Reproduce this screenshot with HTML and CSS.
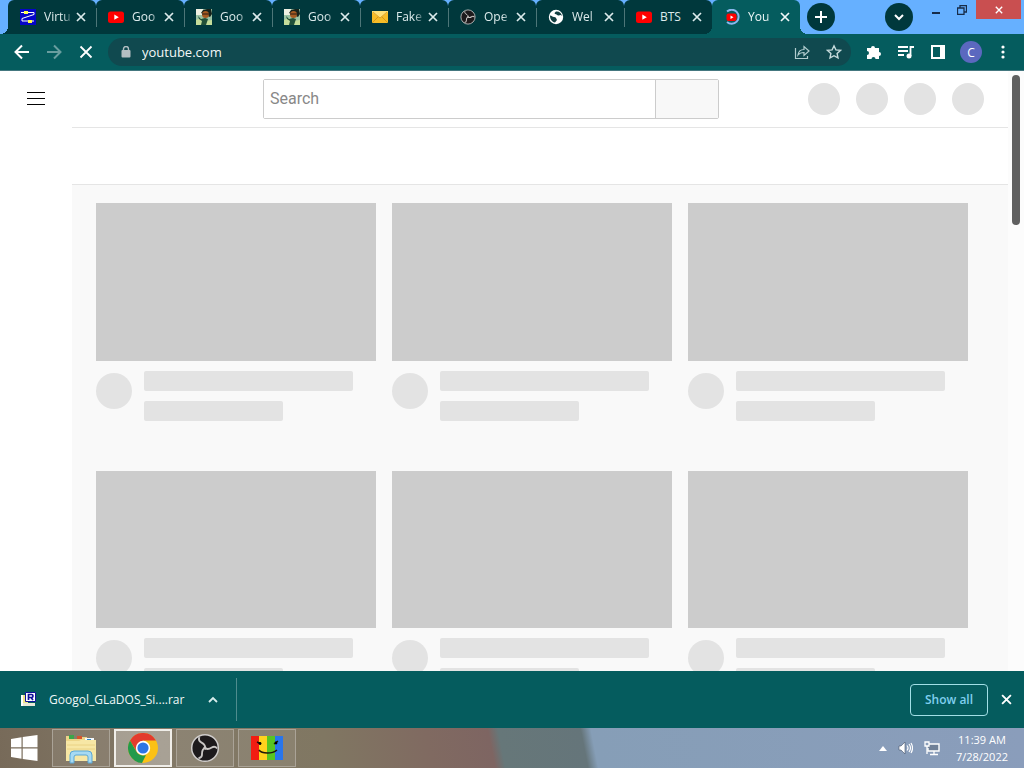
FILE: index.html
```html
<!DOCTYPE html>
<html lang="en">
<head>
<meta charset="utf-8">
<title>YouTube</title>
<link rel="stylesheet" href="styles.css">
</head>
<body>
<svg class="defs" width="0" height="0" aria-hidden="true">
  <symbol id="x" viewBox="0 0 10 10"><path d="M1 1l8 8M9 1L1 9" fill="none" stroke="currentColor" stroke-width="1.7"/></symbol>
  <symbol id="yt" viewBox="0 0 16 16"><rect x="0" y="2.500" width="16" height="11.500" rx="2.500" fill="#f00"/><path d="M6.300 5.600v5.200l4.500-2.600z" fill="#fff"/></symbol>
  <symbol id="photo" viewBox="0 0 16 16"><path d="M0 0h16v16H0z" fill="#9bc3a5"/><path d="M0 0h7v6H0z" fill="#eef0e2"/><path d="M0 11l5-2 4 3 7-1v5H0z" fill="#c5dd9a"/><path d="M5 4l2-3 4-1h4l1 5-2 3z" fill="#16221b"/><circle cx="9.500" cy="5.500" r="3.500" fill="#a65a22"/><path d="M6 5h7" stroke="#2a1c14"/><path d="M2 7l3 3 4-1 3 1-1 3-1 3H5l1-4-3-2z" fill="#215039"/></symbol>
  <symbol id="obs" viewBox="0 0 32 32"><circle cx="16" cy="16" r="14.200" fill="#1d1a1c" stroke="#d0cdcb" stroke-width="1.600"/><g id="blades" fill="none" stroke="#c9c6c4" stroke-width="2"><path id="blade" d="M16 17.500c1-4-1-6-4-7.500-2-1-3-3-2-5.500"/><path d="M16 17.500c1-4-1-6-4-7.500-2-1-3-3-2-5.500" transform="rotate(120 16 16)"/><path d="M16 17.500c1-4-1-6-4-7.500-2-1-3-3-2-5.500" transform="rotate(240 16 16)"/></g></symbol>
</svg>
<div class="browser">
  <header class="tabstrip">
    <nav class="tabs" aria-label="Tabs">
      <div class="tab first"><svg class="fav" viewBox="0 0 16 16"><path fill="#0505c8" d="M0 0h16v16H0z"/><path d="M1 3.500h13v2L2 9.500v2.500h12" fill="none" stroke="#fff"/><path d="M4 2h4v3H4zM8 11h4v3H8z" fill="#ffff4a"/></svg><span class="title">Virtu</span><button class="close" aria-label="Close tab"><svg><use href="#x"/></svg></button></div>
      <div class="tab"><svg class="fav"><use href="#yt"/></svg><span class="title">Goo</span><button class="close" aria-label="Close tab"><svg><use href="#x"/></svg></button></div>
      <div class="tab"><svg class="fav"><use href="#photo"/></svg><span class="title">Goo</span><button class="close" aria-label="Close tab"><svg><use href="#x"/></svg></button></div>
      <div class="tab"><svg class="fav"><use href="#photo"/></svg><span class="title">Goo</span><button class="close" aria-label="Close tab"><svg><use href="#x"/></svg></button></div>
      <div class="tab"><svg class="fav" viewBox="0 0 16 16"><rect y="2" width="16" height="12" rx="1" fill="#f7bd27"/><path d="M0 3l8 6 8-6v-1H0z" fill="#ffe177"/><path d="M1 3l7 6 7-6M1 13l5-5M15 13l-5-5" fill="none" stroke="#c98a12" stroke-width=".7"/></svg><span class="title">Fake</span><button class="close" aria-label="Close tab"><svg><use href="#x"/></svg></button></div>
      <div class="tab"><svg class="fav"><use href="#obs"/></svg><span class="title">Ope</span><button class="close" aria-label="Close tab"><svg><use href="#x"/></svg></button></div>
      <div class="tab"><svg class="fav" viewBox="0 0 16 16"><circle cx="8" cy="8" r="7.200" fill="#fff"/><path d="M2 6.500c2 0 2 1.500 4 1.500s2 1 3 3l-2 2.500c-3-.5-5-3-5-7zM8 2.500c-1 1.500-2 1-1 2.500 2 0 2 2 4 1.500 1-1 2-.5 3 .5-.5-3-3-5-6-4.500z" fill="#123f42"/></svg><span class="title">Wel</span><button class="close" aria-label="Close tab"><svg><use href="#x"/></svg></button></div>
      <div class="tab last"><svg class="fav"><use href="#yt"/></svg><span class="title">BTS</span><button class="close" aria-label="Close tab"><svg><use href="#x"/></svg></button></div>
      <div class="tab active"><svg class="fav" viewBox="0 0 16 16"><path d="M3 2.500A7 7 0 1 1 3 13" fill="none" stroke="#8ab8ee" stroke-width="2"/><rect x="2.500" y="4.500" width="10" height="7.500" rx="2" fill="#f00"/><path d="M6.500 6.500v3.400l3-1.700z" fill="#fff"/></svg><span class="title">You</span><button class="close" aria-label="Close tab"><svg><use href="#x"/></svg></button></div>
    </nav>
    <button class="round" aria-label="New tab"><svg width="14" height="14" viewBox="0 0 14 14"><path d="M7 1v12M1 7h12" stroke="#fff" stroke-width="2"/></svg></button>
    <div class="window-controls">
      <button class="round" aria-label="Search tabs"><svg width="12" height="12" viewBox="0 0 12 12"><path d="M2 4l4 4 4-4" fill="none" stroke="#fff" stroke-width="2"/></svg></button>
      <button class="win" aria-label="Minimize"><svg width="10" height="10" viewBox="0 0 10 10"><path d="M1 8h8" stroke="#172c49" stroke-width="2"/></svg></button>
      <button class="win" aria-label="Restore"><svg width="10" height="10" viewBox="0 0 10 10"><path d="M.5 3h6.500v6.500H.5zM3 2.500V.5h6.500V7H7.500" fill="none" stroke="#172c49" stroke-width="1.300"/></svg></button>
      <button class="win win-close" aria-label="Close"><svg width="8" height="8"><use href="#x"/></svg></button>
    </div>
  </header>
  <div class="toolbar">
    <div class="nav">
      <button aria-label="Back"><svg width="16" height="16" viewBox="0 0 16 16"><path d="M15 8H2M8 1.500L1.500 8 8 14.500" fill="none" stroke="#fff" stroke-width="2"/></svg></button>
      <button aria-label="Forward"><svg width="16" height="16" viewBox="0 0 16 16"><path d="M1 8h13M8 1.500L14.500 8 8 14.500" fill="none" stroke="#6a9d9f" stroke-width="2"/></svg></button>
      <button aria-label="Stop"><svg width="14" height="14" viewBox="0 0 14 14"><path d="M1.500 1.500l11 11M12.500 1.500l-11 11" stroke="#fff" stroke-width="1.800"/></svg></button>
    </div>
    <div class="omnibox">
      <svg width="10" height="12" viewBox="0 0 10 12"><rect x=".5" y="4" width="9" height="7.500" rx="1" fill="#b3bec2"/><path d="M2.500 5V3a2.500 2.500 0 0 1 5 0v2" fill="none" stroke="#b3bec2" stroke-width="1.400"/></svg>
      <input class="address" type="text" value="youtube.com" aria-label="Address">
      <button aria-label="Share"><svg width="16" height="16" viewBox="0 0 16 16"><path d="M1.500 4v10.500h12V12M4 11c.5-4 3-5.500 6-5.500V2.500l5 4.500-5 4.500V8.500C7.500 8.500 5.500 9 4 11z" fill="none" stroke="#b2cdcf" stroke-width="1.200"/></svg></button>
      <button aria-label="Bookmark"><svg width="16" height="16" viewBox="0 0 16 16"><path d="M8 1.800l1.900 4.100 4.500.5-3.300 3 .9 4.500L8 11.700l-4 2.200.9-4.500-3.300-3 4.500-.5z" fill="none" stroke="#c5dadb" stroke-width="1.400"/></svg></button>
    </div>
    <div class="actions">
      <button aria-label="Extensions"><svg width="16" height="16" viewBox="0 0 16 16"><path d="M1 4h4a2 2 0 1 1 4 0h4v4a2 2 0 1 1 0 4v3H9.500a2 2 0 1 0-4 0H1v-4a2 2 0 1 0 0-4z" fill="#fff"/></svg></button>
      <button aria-label="Media"><svg width="18" height="16" viewBox="0 0 18 16"><path d="M1 3h10M1 7h10M1 11h6M13.500 12V3H17" fill="none" stroke="#fff" stroke-width="1.800"/><circle cx="12" cy="12" r="2.500" fill="#fff"/></svg></button>
      <button aria-label="Side panel"><svg width="14" height="14" viewBox="0 0 14 14"><path d="M1 1h12v12H1z" fill="none" stroke="#fff" stroke-width="2"/><path d="M9 1h4v12H9z" fill="#fff"/></svg></button>
      <button class="profile" aria-label="Profile">C</button>
      <button class="more" aria-label="Menu"><svg width="4" height="14" viewBox="0 0 4 14" fill="#fff"><circle cx="2" cy="2" r="1.600"/><circle cx="2" cy="7" r="1.600"/><circle cx="2" cy="12" r="1.600"/></svg></button>
    </div>
  </div>
  <div class="page">
    <aside class="rail"><button aria-label="Guide"><svg width="18" height="14" viewBox="0 0 18 14"><path d="M0 .5h18M0 6.500h18M0 12.500h18" stroke="#030303"/></svg></button></aside>
    <main class="main">
      <div class="masthead">
        <form class="search"><input type="search" placeholder="Search" aria-label="Search"><button type="button" aria-label="Search"></button></form>
        <div class="circles"><i></i><i></i><i></i><i></i></div>
      </div>
      <div class="chips"></div>
      <div class="grid">
        <article class="card"><div class="thumb"></div><div class="details"><i></i><div class="lines"><b></b><b></b></div></div></article>
        <article class="card"><div class="thumb"></div><div class="details"><i></i><div class="lines"><b></b><b></b></div></div></article>
        <article class="card"><div class="thumb"></div><div class="details"><i></i><div class="lines"><b></b><b></b></div></div></article>
        <article class="card"><div class="thumb"></div><div class="details"><i></i><div class="lines"><b></b><b></b></div></div></article>
        <article class="card"><div class="thumb"></div><div class="details"><i></i><div class="lines"><b></b><b></b></div></div></article>
        <article class="card"><div class="thumb"></div><div class="details"><i></i><div class="lines"><b></b><b></b></div></div></article>
      </div>
    </main>
    <div class="scroll"><div class="thumbbar"></div></div>
  </div>
  <section class="downloads">
    <div class="download">
      <svg width="16" height="16" viewBox="0 0 16 16"><path d="M1 3h7v11H1z" fill="#efe58a"/><path d="M1 3h2v11H1z" fill="#fff"/><path d="M3 11h12v3H3z" fill="#e9e9d8"/><path d="M5.500 .5h10v9h-10z" fill="#fff" stroke="#10109a"/><path d="M8.500 8V2.500h3a1.500 1.500 0 0 1 0 3h-3M11 5.500L13 8" fill="none" stroke="#10109a" stroke-width="1.700"/></svg>
      <span>Googol_GLaDOS_Si....rar</span>
      <button aria-label="Download options"><svg width="10" height="8" viewBox="0 0 10 8"><path d="M1 6l4-4 4 4" fill="none" stroke="#d9eded" stroke-width="1.800"/></svg></button>
    </div>
    <button class="showall">Show all</button>
    <button class="dismiss" aria-label="Close downloads"><svg width="11" height="11"><use href="#x"/></svg></button>
  </section>
  <footer class="taskbar">
    <button class="start" aria-label="Start"><svg width="28" height="26" viewBox="0 0 28 26" fill="#fff"><path d="M1 4l10.500-1.700v10H1zM12.700 2.100L27.500 0v12.300H12.700zM1 13.500h10.500v10.200L1 22zM12.700 13.500h14.800V26l-14.800-2.100z"/></svg></button>
    <button class="app" aria-label="File Explorer"><svg width="32" height="32" viewBox="0 0 32 32"><path d="M1 4h7v3h8V5h6v3h9v21H1z" fill="#edd588"/><path d="M4 3h5v4H4z" fill="#3ba64b"/><path d="M12 4h5v3h-5z" fill="#d7542c"/><path d="M20 6h9v3h-9z" fill="#f5f8fa"/><path d="M22 7h4v1h-4z" fill="#2d8bcd"/><path d="M1 9h13l2-1h15v21H1z" fill="#f7e7a5"/><path d="M2 13h28M2 17h28" stroke="#ead284"/><path d="M5 31V23q0-4 4-4h14q4 0 4 4v8h-4v-6q0-2-2-2H11q-2 0-2 2v6z" fill="#a7daf3" stroke="#5aa7d5"/></svg></button>
    <button class="app current" aria-label="Chrome"><svg width="30" height="30" viewBox="0 0 30 30"><circle cx="15" cy="15" r="15" fill="#fbc116"/><path d="M2 7.500A15 15 0 0 1 28 7.500H15L9 19z" fill="#e33b2e"/><path d="M2 7.500L8.500 18.800c2 3.500 6 4.600 9.500 3.200L14 30A15 15 0 0 1 2 7.500z" fill="#229a4b"/><circle cx="15" cy="15" r="7.200" fill="#fff"/><circle cx="15" cy="15" r="5.600" fill="#2f75e5"/></svg></button>
    <button class="app" aria-label="OBS Studio"><svg width="30" height="30"><use href="#obs"/></svg></button>
    <button class="app" aria-label="Smiley"><svg width="32" height="24" viewBox="0 0 32 24"><path d="M0 0h8v24H0z" fill="#f21d12"/><path d="M8 0h8v24H8z" fill="#ffd21d"/><path d="M16 0h8v24h-8z" fill="#58c421"/><path d="M24 0h8v24h-8z" fill="#2875ec"/><path d="M8 14c3 4 13 4 18 0M6 6l4 2M23 8l4-3" fill="none" stroke="#1c180d" stroke-width="1.500"/><circle cx="9" cy="7.500" r="1.400"/><circle cx="25" cy="7" r="1.400"/></svg></button>
    <div class="tray">
      <svg width="8" height="5" viewBox="0 0 8 5"><path d="M4 0l4 5H0z" fill="#fff"/></svg>
      <svg width="15" height="14" viewBox="0 0 15 14"><path d="M1 5h2l4-4v12L3 9H1z" fill="#fff" stroke="#44536a" stroke-width=".6"/><path d="M9 4.500q2 2.500 0 5M11 3q3 4 0 8M13 2q3 5 0 10" fill="none" stroke="#fff" stroke-width="1.200"/></svg>
      <svg width="16" height="15" viewBox="0 0 16 15"><path d="M5 3h10v7H4V7" fill="#6f8097" stroke="#fff" stroke-width="1.400"/><path d="M1 1h4v4H1zM3 5v8M6 13.500h8M10 10v3" fill="none" stroke="#fff" stroke-width="1.300"/></svg>
      <time class="clock"><span>11:39 AM</span><span>7/28/2022</span></time>
    </div>
  </footer>
</div>
</body>
</html>
```

FILE: styles.css
```css
* { box-sizing: border-box; }
body { margin: 0; font-family: "Open Sans", "Noto Sans", sans-serif; font-size: 12px; }
button { margin: 0; padding: 0; border: 0; background: none; color: inherit; font: inherit; display: flex; align-items: center; justify-content: center; flex: none; }
svg { display: block; flex: none; }
.defs { position: absolute; }
.browser { height: 100vh; display: flex; flex-direction: column; overflow: hidden; }

.tabstrip { display: flex; height: 34px; background: #66b0ff; padding-left: 8px; flex: none; }
.tabs { display: flex; flex: 0 1 792px; min-width: 0; }
.tab { position: relative; flex: 1 1 0; min-width: 0; display: flex; align-items: center; padding: 0 8px 0 12px; background: #00383c; border-radius: 6px 6px 0 0; color: #dcebec; }
.tab:not(.active):not(.last)::after { content: ""; position: absolute; right: -1px; top: 8px; width: 1px; height: 19px; background: #4d7678; z-index: 1; }
.active { background: #055c5e; color: #f0f8f8; }
.first::before, .active::before, .active::after { content: ""; position: absolute; bottom: 0; width: 8px; height: 8px; }
.first::before { left: -8px; background: radial-gradient(circle at 0 0, transparent 8px, #00383c 8px); }
.active::before { left: -8px; background: radial-gradient(circle at 0 0, transparent 8px, #055c5e 8px); }
.active::after { right: -8px; background: radial-gradient(circle at 100% 0, transparent 8px, #055c5e 8px); }
.fav { width: 16px; height: 16px; margin-right: 8px; }
.title { flex: 1; min-width: 0; white-space: nowrap; line-height: 16px; mask-image: linear-gradient(to right, #000 70%, rgba(0, 0, 0, .3)); }
.last .title { mask-image: none; }
.close { width: 14px; height: 16px; margin-left: 4px; }
.close svg { width: 10px; height: 10px; }
.round { width: 28px; height: 28px; border-radius: 50%; background: #00383c; margin-top: 3px; }
.tabs + .round { margin-left: 7px; }
.window-controls { margin-left: auto; display: flex; align-items: flex-start; padding-right: 3px; }
.window-controls .round { margin-right: 10px; }
.win { width: 26px; height: 19px; }
.win-close { width: 45px; background: #c94f50; color: #fff; margin-left: 1px; }

.toolbar { display: flex; align-items: center; flex: none; height: 37px; padding: 0 14px; background: #055c5e; border-bottom: 1px solid #44777f; }
.nav { display: flex; gap: 16px; }
.nav button { width: 16px; height: 16px; }
.omnibox { flex: 1; min-width: 0; display: flex; align-items: center; height: 28px; margin: 0 14px; padding: 0 9px 0 13px; border-radius: 14px; background: #10494f; gap: 16px; }
.address { flex: 1; min-width: 0; margin: 0 0 0 -5px; padding: 0; border: 0; outline: 0; background: none; color: #f3f8f8; font: inherit; font-size: 13px; }
.actions { display: flex; align-items: center; gap: 14px; }
.actions button { min-width: 18px; }
.actions .profile { width: 22px; height: 22px; margin-left: -1px; border-radius: 50%; background: #5b68bf; color: #fff; font-size: 12px; }
.actions .more { min-width: 14px; }

.page { flex: 1; min-height: 0; display: flex; overflow: hidden; background: #fff; }
.rail { flex: 0 0 72px; }
.rail button { width: 72px; height: 56px; }
.main { flex: 1; min-width: 0; background: #f9f9f9; }
.masthead { display: flex; align-items: center; justify-content: space-between; height: 57px; padding: 0 24px 0 191px; background: #fff; border-bottom: 1px solid #e5e5e5; gap: 16px; }
.search { display: flex; flex: 0 1 456px; height: 40px; margin: 0; border: 1px solid #ccc; border-radius: 2px; }
.search input { flex: 1; min-width: 0; padding: 0 6px 2px; border: 0; outline: 0; background: #fff; font-family: Roboto, sans-serif; font-size: 16px; appearance: none; }
.search input::placeholder { color: #888; }
.search button { width: 63px; background: #f8f8f8; border-left: 1px solid #ccc; }
.circles { display: flex; gap: 16px; flex: none; }
.circles i { width: 32px; height: 32px; border-radius: 50%; background: #e3e3e3; }
.chips { height: 57px; background: #fff; border-bottom: 1px solid #e5e5e5; }
.grid { display: grid; grid-template-columns: repeat(3, minmax(0, 1fr)); column-gap: 16px; padding: 18px 40px 0 24px; }
.thumb { aspect-ratio: 16 / 9; background: #ccc; }
.details { display: flex; height: 110px; padding-top: 10px; gap: 12px; }
.details i { flex: none; width: 36px; height: 36px; margin-top: 2px; border-radius: 50%; background: #e3e3e3; }
.lines { flex: 1; display: flex; flex-direction: column; gap: 10px; }
.lines b { width: 90%; height: 20px; border-radius: 2px; background: #e3e3e3; }
.lines b + b { width: 60%; }
.scroll { flex: 0 0 16px; padding: 4px; background: #fcfcfc; }
.thumbbar { height: 150px; border-radius: 4px; background: #606060; }

.downloads { display: flex; align-items: center; flex: none; height: 57px; padding-right: 12px; background: #055c5e; color: #f0f8f8; }
.download { display: flex; align-items: center; height: 43px; width: 237px; padding: 0 18px 0 20px; border-right: 1px solid #4f8c8e; }
.download span { flex: 1; margin-left: 13px; white-space: nowrap; line-height: 16px; }
.showall { width: 78px; height: 32px; margin-left: auto; border: 1px solid #a2dfe6; border-radius: 4px; color: #80cfee; font-weight: 600; }
.dismiss { margin-left: 13px; color: #fff; }

.taskbar { display: flex; align-items: center; flex: none; height: 40px; gap: 4px; background: linear-gradient(79deg, #776a59 0, #837967 16%, #807762 32%, #806a61 42%, #7e6562 48%, #667779 49%, #65757a 57%, #869eb7 58%, #8a9dbb 100%); }
.start { width: 48px; height: 40px; }
.app { width: 58px; height: 38px; border: 1px solid #aaa397; background: rgba(255, 255, 255, .08); }
.current { border: 2px solid #f0eee9; background: rgba(255, 255, 255, .3); }
.tray { margin-left: auto; display: flex; align-items: center; gap: 11px; padding-right: 16px; color: #fff; }
.clock { display: flex; flex-direction: column; align-items: center; font-size: 11px; line-height: 17px; margin-left: 5px; }
```
